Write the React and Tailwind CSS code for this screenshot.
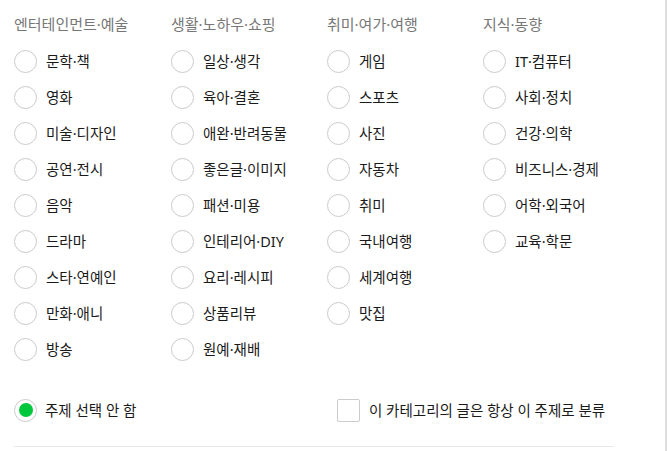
const columns = [
  {
    title: "엔터테인먼트·예술",
    items: ["문학·책", "영화", "미술·디자인", "공연·전시", "음악", "드라마", "스타·연예인", "만화·애니", "방송"],
  },
  {
    title: "생활·노하우·쇼핑",
    items: ["일상·생각", "육아·결혼", "애완·반려동물", "좋은글·이미지", "패션·미용", "인테리어·DIY", "요리·레시피", "상품리뷰", "원예·재배"],
  },
  {
    title: "취미·여가·여행",
    items: ["게임", "스포츠", "사진", "자동차", "취미", "국내여행", "세계여행", "맛집"],
  },
  {
    title: "지식·동향",
    items: ["IT·컴퓨터", "사회·정치", "건강·의학", "비즈니스·경제", "어학·외국어", "교육·학문"],
  },
];

const Radio = ({ checked }) => (
  <span className="w-[23px] h-[23px] rounded-full border border-[#cbcbcb] bg-white flex items-center justify-center shrink-0">
    {checked && <span className="w-[14px] h-[14px] rounded-full bg-[#00c73c]" />}
  </span>
);

const App = () => {
  return (
    <div
      className="w-[667px] h-[451px] bg-white border-r-2 border-[#dedede] overflow-hidden"
      style={{ fontFamily: '"Noto Sans", "Noto Sans CJK KR", sans-serif' }}
    >
      <div className="pt-[14px] pl-[14px]">
        <div className="grid grid-cols-[157px_156px_156px_156px]">
          {columns.map((col) => (
            <div key={col.title}>
              <div className="h-[20px] leading-[20px] text-[15px] text-[#777]">
                {col.title}
              </div>
              <ul className="mt-[9px]">
                {col.items.map((item) => (
                  <li key={item} className="h-[36px] flex items-center">
                    <Radio />
                    <span className="ml-[9px] text-[14.5px] leading-[20px] text-[#1a1a1a]">
                      {item}
                    </span>
                  </li>
                ))}
              </ul>
            </div>
          ))}
        </div>

        <div className="mt-[31px] h-[24px] flex items-center">
          <label className="w-[323px] flex items-center">
            <Radio checked />
            <span className="ml-[8px] text-[14.5px] leading-[20px] text-[#1a1a1a]">
              주제 선택 안 함
            </span>
          </label>
          <label className="flex items-center">
            <span className="w-[23px] h-[23px] rounded-[2px] border border-[#cbcbcb] bg-white shrink-0" />
            <span className="ml-[9px] text-[14.5px] leading-[20px] text-[#1a1a1a]">
              이 카테고리의 글은 항상 이 주제로 분류
            </span>
          </label>
        </div>

        <div className="mt-[24px] w-[600px] border-t border-[#e8e8e8]" />
      </div>
    </div>
  );
};

export default App;
